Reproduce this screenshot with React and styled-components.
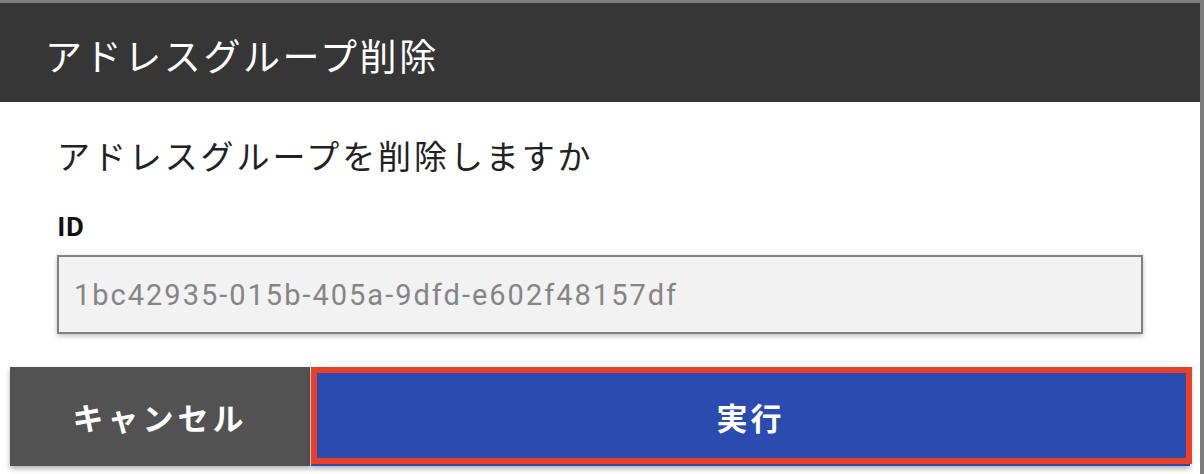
import React from 'react'
import styled, { createGlobalStyle } from 'styled-components'

const Global = createGlobalStyle`
  html, body {
    margin: 0;
    padding: 0;
    background: #7d7d7d;
    font-family: "Noto Sans CJK JP", "Noto Sans", sans-serif;
  }
`

const Backdrop = styled.div`
  width: 1204px;
  height: 474px;
  padding-top: 3px;
  box-sizing: border-box;
  background: #7d7d7d;
  overflow: hidden;
`

const Dialog = styled.div`
  width: 1200px;
  height: 471px;
  background: #fff;
  display: flex;
  flex-direction: column;
`

const Header = styled.div`
  height: 99px;
  box-sizing: border-box;
  background: #363636;
  color: #fff;
  display: flex;
  align-items: center;
  padding: 6px 0 0 45px;
`

const Title = styled.h1`
  margin: 0;
  font-size: 37px;
  font-weight: 400;
  letter-spacing: 2.6px;
  line-height: 1;
`

const Body = styled.div`
  padding: 33px 57px 0 57px;
  display: flex;
  flex-direction: column;
`

const Message = styled.p`
  margin: 0 0 0 0;
  font-size: 33px;
  line-height: 40px;
  letter-spacing: 2.9px;
  color: #222;
`

const Label = styled.label`
  margin-top: 35px;
  font-size: 26px;
  font-weight: 700;
  line-height: 30px;
  color: #111;
`

const Field = styled.input`
  margin-top: 15px;
  height: 79px;
  box-sizing: border-box;
  border: 2px solid #808080;
  background: #f2f2f2;
  box-shadow: 0 2px 5px rgba(0, 0, 0, 0.25);
  padding: 0 15px;
  font-family: "Roboto", "Noto Sans", sans-serif;
  font-size: 29px;
  letter-spacing: 2px;
  color: #858585;
  outline: none;
`

const Footer = styled.div`
  margin-top: 33px;
  padding: 0 10px;
  display: flex;
  gap: 1px;
  height: 99px;
`

const Button = styled.button`
  position: relative;
  border: none;
  margin: 0;
  padding: 0;
  color: #fff;
  font-family: "Noto Sans CJK JP", "Noto Sans", sans-serif;
  font-weight: 700;
  font-size: 31px;
  letter-spacing: ${p => p.$spacing || 3}px;
  background: ${p => p.$bg};
  width: ${p => (p.$width ? p.$width + 'px' : 'auto')};
  flex: ${p => (p.$width ? 'none' : '1')};
  box-shadow: 0 3px 5px rgba(0, 0, 0, 0.3);
  cursor: pointer;
`

const Highlight = styled.span`
  position: absolute;
  left: 0;
  top: 0;
  right: -2px;
  bottom: 2px;
  border: 6px solid #e8402a;
  pointer-events: none;
`

export default function App() {
  return (
    <>
      <Global />
      <Backdrop>
        <Dialog>
          <Header>
            <Title>アドレスグループ削除</Title>
          </Header>
          <Body>
            <Message>アドレスグループを削除しますか</Message>
            <Label>ID</Label>
            <Field readOnly value="1bc42935-015b-405a-9dfd-e602f48157df" />
          </Body>
          <Footer>
            <Button $bg="#525252" $width={300} $spacing={4}>キャンセル</Button>
            <Button $bg="#2a4cb0">
              実行
              <Highlight />
            </Button>
          </Footer>
        </Dialog>
      </Backdrop>
    </>
  )
}
